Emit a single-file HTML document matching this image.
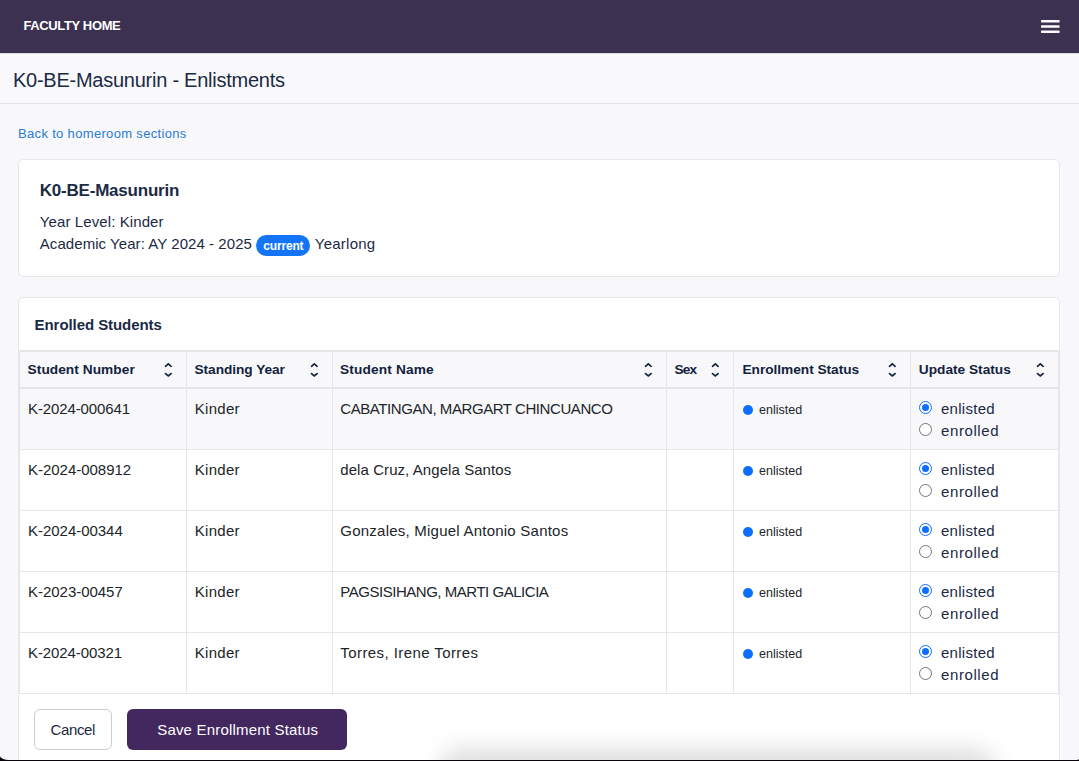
<!DOCTYPE html>
<html>
<head>
<meta charset="utf-8">
<title>K0-BE-Masunurin - Enlistments</title>
<style>
*{box-sizing:border-box;margin:0;padding:0}
html,body{width:1079px;height:761px;overflow:hidden}
body{font-family:"Liberation Sans",sans-serif;background:#f8f8fb;color:#1b2a44;position:relative}
.t{position:absolute;white-space:nowrap}
.si{position:absolute}
.b{position:absolute}
</style>
</head>
<body>
<div class="b" style="left:0;top:0;width:1079px;height:53px;background:#3c3150"></div>
<div class="t" style="left:23.4px;top:19.20px;font-size:13px;line-height:13px;font-weight:bold;color:#ffffff;letter-spacing:-0.36px;">FACULTY HOME</div>
<svg class="si" style="left:1040px;top:18px" width="21" height="17" viewBox="0 0 21 17"><rect x="1" y="2" width="18.6" height="2.4" rx="0.6" fill="#fbfbfd"/><rect x="1" y="7.3" width="18.6" height="2.4" rx="0.6" fill="#fbfbfd"/><rect x="1" y="12.6" width="18.6" height="2.4" rx="0.6" fill="#fbfbfd"/></svg>
<div class="b" style="left:0;top:53px;width:1079px;height:51px;background:#f9f9fb;border-bottom:1px solid #e3e3e8"></div>
<div class="b" style="left:0;top:53px;width:1079px;height:1px;background:#d9dcdf"></div>
<div class="t" style="left:13px;top:69.87px;font-size:20px;line-height:20px;font-weight:normal;color:#1b2a44;letter-spacing:-0.25px;">K0-BE-Masunurin - Enlistments</div>
<div class="t" style="left:18px;top:126.70px;font-size:13px;line-height:13px;font-weight:normal;color:#2a7bd6;letter-spacing:0.33px;">Back to homeroom sections</div>
<div class="b" style="left:18px;top:159px;width:1042px;height:118px;background:#fff;border:1px solid #e6e6eb;border-radius:5px"></div>
<div class="t" style="left:39.8px;top:181.91px;font-size:17px;line-height:17px;font-weight:bold;color:#1b2a44;letter-spacing:-0.22px;">K0-BE-Masunurin</div>
<div class="t" style="left:39.8px;top:214.30px;font-size:15px;line-height:15px;font-weight:normal;color:#1b2a44;letter-spacing:0.1px;">Year Level: Kinder</div>
<div class="t" style="left:39.8px;top:236.00px;font-size:15px;line-height:15px;font-weight:normal;color:#1b2a44;letter-spacing:0.06px;">Academic Year: AY 2024 - 2025</div>
<div class="b" style="left:256px;top:235px;width:54px;height:21px;background:#1375f6;border-radius:11px"></div>
<div class="t" style="left:263.3px;top:239.84px;font-size:12px;line-height:12px;font-weight:bold;color:#ffffff;letter-spacing:-0.17px;">current</div>
<div class="t" style="left:314.8px;top:236.00px;font-size:15px;line-height:15px;font-weight:normal;color:#1b2a44;letter-spacing:0.25px;">Yearlong</div>
<div class="b" style="left:18px;top:297px;width:1042px;height:520px;background:#fff;border:1px solid #e6e6eb;border-radius:5px"></div>
<div class="t" style="left:34.6px;top:317.10px;font-size:15px;line-height:15px;font-weight:bold;color:#1b2a44;letter-spacing:-0.07px;">Enrolled Students</div>
<div class="b" style="left:19px;top:350px;width:1040px;height:39px;background:#f8f8fb;border-top:2px solid #e4e4e9;border-bottom:2px solid #e4e4e9"></div>
<div class="b" style="left:19px;top:389px;width:1040px;height:60px;background:#f8f8fb"></div>
<div class="b" style="left:19px;top:449px;width:1040px;height:1px;background:#e6e6eb"></div>
<div class="b" style="left:19px;top:510px;width:1040px;height:1px;background:#e6e6eb"></div>
<div class="b" style="left:19px;top:571px;width:1040px;height:1px;background:#e6e6eb"></div>
<div class="b" style="left:19px;top:632px;width:1040px;height:1px;background:#e6e6eb"></div>
<div class="b" style="left:19px;top:693px;width:1040px;height:1px;background:#e6e6eb"></div>
<div class="b" style="left:19px;top:350px;width:1px;height:344px;background:#e6e6eb"></div>
<div class="b" style="left:186px;top:350px;width:1px;height:344px;background:#e6e6eb"></div>
<div class="b" style="left:332px;top:350px;width:1px;height:344px;background:#e6e6eb"></div>
<div class="b" style="left:666px;top:350px;width:1px;height:344px;background:#e6e6eb"></div>
<div class="b" style="left:733px;top:350px;width:1px;height:344px;background:#e6e6eb"></div>
<div class="b" style="left:910px;top:350px;width:1px;height:344px;background:#e6e6eb"></div>
<div class="b" style="left:1058px;top:350px;width:1px;height:344px;background:#e6e6eb"></div>
<div class="t" style="left:27.6px;top:362.90px;font-size:13.7px;line-height:13.7px;font-weight:bold;color:#13223c;letter-spacing:0.05px;">Student Number</div>
<svg class="si" style="left:164px;top:362px" width="9" height="16" viewBox="0 0 9 16"><path d="M1.5 4.3 L4.3 1.9 L7.1 4.3 M1.5 11.6 L4.3 14.0 L7.1 11.6" fill="none" stroke="#13223c" stroke-width="1.7" stroke-linecap="round" stroke-linejoin="miter"/></svg>
<div class="t" style="left:194.5px;top:362.90px;font-size:13.7px;line-height:13.7px;font-weight:bold;color:#13223c;letter-spacing:-0.05px;">Standing Year</div>
<svg class="si" style="left:310px;top:362px" width="9" height="16" viewBox="0 0 9 16"><path d="M1.5 4.3 L4.3 1.9 L7.1 4.3 M1.5 11.6 L4.3 14.0 L7.1 11.6" fill="none" stroke="#13223c" stroke-width="1.7" stroke-linecap="round" stroke-linejoin="miter"/></svg>
<div class="t" style="left:340px;top:362.90px;font-size:13.7px;line-height:13.7px;font-weight:bold;color:#13223c;letter-spacing:0.15px;">Student Name</div>
<svg class="si" style="left:644px;top:362px" width="9" height="16" viewBox="0 0 9 16"><path d="M1.5 4.3 L4.3 1.9 L7.1 4.3 M1.5 11.6 L4.3 14.0 L7.1 11.6" fill="none" stroke="#13223c" stroke-width="1.7" stroke-linecap="round" stroke-linejoin="miter"/></svg>
<div class="t" style="left:674.5px;top:362.90px;font-size:13.7px;line-height:13.7px;font-weight:bold;color:#13223c;letter-spacing:-0.9px;">Sex</div>
<svg class="si" style="left:711px;top:362px" width="9" height="16" viewBox="0 0 9 16"><path d="M1.5 4.3 L4.3 1.9 L7.1 4.3 M1.5 11.6 L4.3 14.0 L7.1 11.6" fill="none" stroke="#13223c" stroke-width="1.7" stroke-linecap="round" stroke-linejoin="miter"/></svg>
<div class="t" style="left:742.5px;top:362.90px;font-size:13.7px;line-height:13.7px;font-weight:bold;color:#13223c;letter-spacing:-0.03px;">Enrollment Status</div>
<svg class="si" style="left:888px;top:362px" width="9" height="16" viewBox="0 0 9 16"><path d="M1.5 4.3 L4.3 1.9 L7.1 4.3 M1.5 11.6 L4.3 14.0 L7.1 11.6" fill="none" stroke="#13223c" stroke-width="1.7" stroke-linecap="round" stroke-linejoin="miter"/></svg>
<div class="t" style="left:918.8px;top:362.90px;font-size:13.7px;line-height:13.7px;font-weight:bold;color:#13223c;letter-spacing:0.0px;">Update Status</div>
<svg class="si" style="left:1036px;top:362px" width="9" height="16" viewBox="0 0 9 16"><path d="M1.5 4.3 L4.3 1.9 L7.1 4.3 M1.5 11.6 L4.3 14.0 L7.1 11.6" fill="none" stroke="#13223c" stroke-width="1.7" stroke-linecap="round" stroke-linejoin="miter"/></svg>
<div class="t" style="left:28px;top:400.90px;font-size:15px;line-height:15px;font-weight:normal;color:#212529;letter-spacing:-0.12px;">K-2024-000641</div>
<div class="t" style="left:194.8px;top:400.90px;font-size:15px;line-height:15px;font-weight:normal;color:#212529;letter-spacing:0.27px;">Kinder</div>
<div class="t" style="left:340.3px;top:400.90px;font-size:15px;line-height:15px;font-weight:normal;color:#212529;letter-spacing:-0.43px;">CABATINGAN, MARGART CHINCUANCO</div>
<div class="b" style="left:743px;top:405px;width:10px;height:10px;border-radius:50%;background:#0d6efd"></div>
<div class="t" style="left:759px;top:403.82px;font-size:12.5px;line-height:12.5px;font-weight:normal;color:#212529;letter-spacing:0.03px;">enlisted</div>
<div class="b" style="left:919px;top:401px;width:13px;height:13px;border-radius:50%;border:1px solid #0d6efd;background:#fff"></div>
<div class="b" style="left:922px;top:404px;width:7px;height:7px;border-radius:50%;background:#0d6efd"></div>
<div class="t" style="left:941px;top:400.90px;font-size:15px;line-height:15px;font-weight:normal;color:#1b2a44;letter-spacing:0.28px;">enlisted</div>
<div class="b" style="left:919px;top:423px;width:13px;height:13px;border-radius:50%;border:1px solid #767676;background:#fff"></div>
<div class="t" style="left:941px;top:422.90px;font-size:15px;line-height:15px;font-weight:normal;color:#1b2a44;letter-spacing:0.6px;">enrolled</div>
<div class="t" style="left:28px;top:461.90px;font-size:15px;line-height:15px;font-weight:normal;color:#212529;letter-spacing:-0.02px;">K-2024-008912</div>
<div class="t" style="left:194.8px;top:461.90px;font-size:15px;line-height:15px;font-weight:normal;color:#212529;letter-spacing:0.27px;">Kinder</div>
<div class="t" style="left:340.3px;top:461.90px;font-size:15px;line-height:15px;font-weight:normal;color:#212529;letter-spacing:0.07px;">dela Cruz, Angela Santos</div>
<div class="b" style="left:743px;top:466px;width:10px;height:10px;border-radius:50%;background:#0d6efd"></div>
<div class="t" style="left:759px;top:464.82px;font-size:12.5px;line-height:12.5px;font-weight:normal;color:#212529;letter-spacing:0.03px;">enlisted</div>
<div class="b" style="left:919px;top:462px;width:13px;height:13px;border-radius:50%;border:1px solid #0d6efd;background:#fff"></div>
<div class="b" style="left:922px;top:465px;width:7px;height:7px;border-radius:50%;background:#0d6efd"></div>
<div class="t" style="left:941px;top:461.90px;font-size:15px;line-height:15px;font-weight:normal;color:#1b2a44;letter-spacing:0.28px;">enlisted</div>
<div class="b" style="left:919px;top:484px;width:13px;height:13px;border-radius:50%;border:1px solid #767676;background:#fff"></div>
<div class="t" style="left:941px;top:483.90px;font-size:15px;line-height:15px;font-weight:normal;color:#1b2a44;letter-spacing:0.6px;">enrolled</div>
<div class="t" style="left:28px;top:522.90px;font-size:15px;line-height:15px;font-weight:normal;color:#212529;letter-spacing:-0.03px;">K-2024-00344</div>
<div class="t" style="left:194.8px;top:522.90px;font-size:15px;line-height:15px;font-weight:normal;color:#212529;letter-spacing:0.27px;">Kinder</div>
<div class="t" style="left:340.3px;top:522.90px;font-size:15px;line-height:15px;font-weight:normal;color:#212529;letter-spacing:0.23px;">Gonzales, Miguel Antonio Santos</div>
<div class="b" style="left:743px;top:527px;width:10px;height:10px;border-radius:50%;background:#0d6efd"></div>
<div class="t" style="left:759px;top:525.82px;font-size:12.5px;line-height:12.5px;font-weight:normal;color:#212529;letter-spacing:0.03px;">enlisted</div>
<div class="b" style="left:919px;top:523px;width:13px;height:13px;border-radius:50%;border:1px solid #0d6efd;background:#fff"></div>
<div class="b" style="left:922px;top:526px;width:7px;height:7px;border-radius:50%;background:#0d6efd"></div>
<div class="t" style="left:941px;top:522.90px;font-size:15px;line-height:15px;font-weight:normal;color:#1b2a44;letter-spacing:0.28px;">enlisted</div>
<div class="b" style="left:919px;top:545px;width:13px;height:13px;border-radius:50%;border:1px solid #767676;background:#fff"></div>
<div class="t" style="left:941px;top:544.90px;font-size:15px;line-height:15px;font-weight:normal;color:#1b2a44;letter-spacing:0.6px;">enrolled</div>
<div class="t" style="left:28px;top:583.90px;font-size:15px;line-height:15px;font-weight:normal;color:#212529;letter-spacing:-0.03px;">K-2023-00457</div>
<div class="t" style="left:194.8px;top:583.90px;font-size:15px;line-height:15px;font-weight:normal;color:#212529;letter-spacing:0.27px;">Kinder</div>
<div class="t" style="left:340.3px;top:583.90px;font-size:15px;line-height:15px;font-weight:normal;color:#212529;letter-spacing:-0.47px;">PAGSISIHANG, MARTI GALICIA</div>
<div class="b" style="left:743px;top:588px;width:10px;height:10px;border-radius:50%;background:#0d6efd"></div>
<div class="t" style="left:759px;top:586.82px;font-size:12.5px;line-height:12.5px;font-weight:normal;color:#212529;letter-spacing:0.03px;">enlisted</div>
<div class="b" style="left:919px;top:584px;width:13px;height:13px;border-radius:50%;border:1px solid #0d6efd;background:#fff"></div>
<div class="b" style="left:922px;top:587px;width:7px;height:7px;border-radius:50%;background:#0d6efd"></div>
<div class="t" style="left:941px;top:583.90px;font-size:15px;line-height:15px;font-weight:normal;color:#1b2a44;letter-spacing:0.28px;">enlisted</div>
<div class="b" style="left:919px;top:606px;width:13px;height:13px;border-radius:50%;border:1px solid #767676;background:#fff"></div>
<div class="t" style="left:941px;top:605.90px;font-size:15px;line-height:15px;font-weight:normal;color:#1b2a44;letter-spacing:0.6px;">enrolled</div>
<div class="t" style="left:28px;top:644.90px;font-size:15px;line-height:15px;font-weight:normal;color:#212529;letter-spacing:-0.1px;">K-2024-00321</div>
<div class="t" style="left:194.8px;top:644.90px;font-size:15px;line-height:15px;font-weight:normal;color:#212529;letter-spacing:0.27px;">Kinder</div>
<div class="t" style="left:340.3px;top:644.90px;font-size:15px;line-height:15px;font-weight:normal;color:#212529;letter-spacing:0.42px;">Torres, Irene Torres</div>
<div class="b" style="left:743px;top:649px;width:10px;height:10px;border-radius:50%;background:#0d6efd"></div>
<div class="t" style="left:759px;top:647.82px;font-size:12.5px;line-height:12.5px;font-weight:normal;color:#212529;letter-spacing:0.03px;">enlisted</div>
<div class="b" style="left:919px;top:645px;width:13px;height:13px;border-radius:50%;border:1px solid #0d6efd;background:#fff"></div>
<div class="b" style="left:922px;top:648px;width:7px;height:7px;border-radius:50%;background:#0d6efd"></div>
<div class="t" style="left:941px;top:644.90px;font-size:15px;line-height:15px;font-weight:normal;color:#1b2a44;letter-spacing:0.28px;">enlisted</div>
<div class="b" style="left:919px;top:667px;width:13px;height:13px;border-radius:50%;border:1px solid #767676;background:#fff"></div>
<div class="t" style="left:941px;top:666.90px;font-size:15px;line-height:15px;font-weight:normal;color:#1b2a44;letter-spacing:0.6px;">enrolled</div>
<div class="b" style="left:34px;top:709px;width:78px;height:41px;background:#fff;border:1px solid #c7cdd5;border-radius:6px"></div>
<div class="t" style="left:50.5px;top:722.30px;font-size:15px;line-height:15px;font-weight:normal;color:#1b2a44;letter-spacing:-0.38px;">Cancel</div>
<div class="b" style="left:127px;top:709px;width:220px;height:41px;background:#43275f;border-radius:6px"></div>
<div class="t" style="left:157.2px;top:722.30px;font-size:15px;line-height:15px;font-weight:normal;color:#ffffff;letter-spacing:0.19px;">Save Enrollment Status</div>
<div class="b" style="left:440px;top:749px;width:555px;height:40px;border-radius:40px;background:rgba(0,0,0,0.13);filter:blur(11px)"></div>
<div class="b" style="left:-10px;top:700px;width:1099px;height:70px;border:10px solid #07040c;border-top:none;border-radius:0 0 12px 19px / 0 0 11px 14px"></div>
</body>
</html>
